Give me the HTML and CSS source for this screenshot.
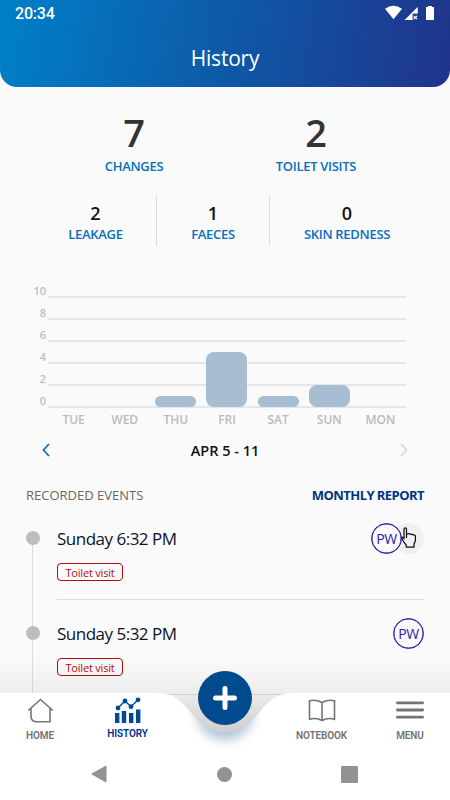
FILE: index.html
```html
<!DOCTYPE html>
<html lang="en">
<head>
  <meta charset="UTF-8" />
  <meta name="viewport" content="width=device-width, initial-scale=1.0"/>
  <title>History</title>
  <link rel="stylesheet" href="styles.css">
</head>
<body>
  <header class="header">
    <div class="status-bar">
      <span class="clock">20:34</span>
      <svg class="status-icons" width="52" height="18" viewBox="0 0 52 18" fill="#fff">
        <path d="M0 3.8Q8.5-2.2 17 3.8L8.5 14.3Z"/>
        <path d="M19.5 15L32.7 2V8.6H27.6V15Z"/>
        <path d="M32.7 2V8.6H27.6V7Z" opacity=".35"/>
        <path d="M28.7 10.8L32 14.2M32 10.8L28.7 14.2" stroke="#fff" stroke-width="1.2"/>
        <path d="M43 1h4v1h2v13h-8V2h2z"/>
      </svg>
    </div>
    <h1 class="title">History</h1>
  </header>

  <main class="content">
    <section class="stats">
      <div class="stat"><strong>7</strong><span>CHANGES</span></div>
      <div class="stat"><strong>2</strong><span>TOILET VISITS</span></div>
    </section>

    <section class="details">
      <div class="detail"><strong>2</strong><span>LEAKAGE</span></div>
      <div class="detail"><strong>1</strong><span>FAECES</span></div>
      <div class="detail"><strong>0</strong><span>SKIN REDNESS</span></div>
    </section>

    <section class="chart">
      <div class="scale">
        <span>10</span><span>8</span><span>6</span><span>4</span><span>2</span><span>0</span>
      </div>
      <div class="plot">
        <div class="bars">
          <div class="bar" style="height: 0"></div>
          <div class="bar" style="height: 0"></div>
          <div class="bar" style="height: 10%"></div>
          <div class="bar" style="height: 50%"></div>
          <div class="bar" style="height: 10%"></div>
          <div class="bar" style="height: 20%"></div>
          <div class="bar" style="height: 0"></div>
        </div>
        <div class="days">
          <span>TUE</span><span>WED</span><span>THU</span><span>FRI</span><span>SAT</span><span>SUN</span><span>MON</span>
        </div>
      </div>
    </section>

    <div class="week">
      <svg width="8" height="14" viewBox="0 0 8 14" fill="none" stroke="#0a72c4" stroke-width="1.8"><path d="M7 1L1.5 7L7 13"/></svg>
      <span>APR 5 - 11</span>
      <svg width="8" height="14" viewBox="0 0 8 14" fill="none" stroke="#d8d8d8" stroke-width="1.8"><path d="M1 1L6.5 7L1 13"/></svg>
    </div>

    <div class="events-head">
      <span class="events-title">RECORDED EVENTS</span>
      <a class="report">MONTHLY REPORT</a>
    </div>

    <section class="events">
      <article class="event">
        <div class="event-row">
          <span class="dot"></span>
          <h2>Sunday 6:32 PM</h2>
          <div class="people">
            <span class="avatar">PW</span>
            <span class="avatar-empty">
              <svg class="cursor" width="16" height="21" viewBox="0 0 16 21"><path d="M5.5 11V2Q5.5.8 4.3.8T3 2V11.5L1.8 10.4Q.2 9.8.7 11.3L3 15.5L5.3 18V20H13V17L14.4 14V9Q14 7.6 12.2 8Q11 6.7 9.5 7.3Q8 6.2 6.5 7H5.5" fill="#f1f2f4" stroke="#111" stroke-width="1.25"/></svg>
            </span>
          </div>
        </div>
        <div class="event-body"><span class="tag">Toilet visit</span></div>
      </article>
      <article class="event">
        <div class="event-row">
          <span class="dot"></span>
          <h2>Sunday 5:32 PM</h2>
          <div class="people"><span class="avatar">PW</span></div>
        </div>
        <div class="event-body"><span class="tag">Toilet visit</span></div>
      </article>
    </section>
  </main>

  <div class="fade"></div>

  <footer class="bottom">
    <svg class="bottom-shape" width="450" height="107" viewBox="0 0 450 107">
      <defs>
        <filter id="glow" x="-50%" y="-50%" width="200%" height="200%"><feGaussianBlur stdDeviation="6"/></filter>
        <clipPath id="sheet"><path d="M0 0H158C176 0 184 12 194 23C203 34 211 39 225 39C239 39 247 34 256 23C266 12 274 0 292 0H450V107H0Z"/></clipPath>
      </defs>
      <g clip-path="url(#sheet)">
        <rect width="450" height="107" fill="#fff"/>
        <circle cx="225" cy="19" r="28" fill="#004b8d" opacity=".33" filter="url(#glow)"/>
      </g>
    </svg>
    <nav class="tabs">
      <a class="tab tab-home">
        <svg width="27" height="26" viewBox="0 0 27 26" fill="none" stroke="#747474" stroke-width="1.6"><path d="M1.2 12.5L13.5 1.5L25.8 12.5M4 10.5V18Q4 23.8 10 23.8H23V10.5"/></svg>
        <span>HOME</span>
      </a>
      <a class="tab tab-history">
        <svg width="27" height="27" viewBox="0 0 27 27" fill="#004a93"><path d="M1 16h4.4v10H1zM7.8 14h4.4v12H7.8zM15 16h4.4v10H15zM22 12.5h4.4V26H22z"/><circle cx="4" cy="11" r="2.4"/><circle cx="11" cy="4" r="2.4"/><circle cx="17" cy="9.7" r="2.4"/><circle cx="24" cy="2.8" r="2.4"/><path d="M4 11L11 4L17 9.7L24 2.8" fill="none" stroke="#004a93" stroke-width="1.4"/></svg>
        <span>HISTORY</span>
      </a>
      <button class="add" aria-label="Add">
        <svg width="24" height="24" viewBox="0 0 24 24" fill="none" stroke="#fff" stroke-width="5" stroke-linecap="round"><path d="M12 2.5V21.5M2.5 12H21.5"/></svg>
      </button>
      <a class="tab tab-notebook">
        <svg width="28" height="23" viewBox="0 0 28 23" fill="none" stroke="#747474" stroke-width="1.6"><path d="M14 3.5Q8 .2 1.5 1.7V20.3Q8 18.3 14 21.5Q20 18.3 26.5 20.3V1.7Q20 .2 14 3.5V21.5"/></svg>
        <span>NOTEBOOK</span>
      </a>
      <a class="tab tab-menu">
        <svg width="28" height="20" viewBox="0 0 28 20" fill="none" stroke="#747474" stroke-width="2.8" stroke-linecap="round"><path d="M1.4 2.8H26.6M1.4 10H26.6M1.4 17.2H26.6"/></svg>
        <span>MENU</span>
      </a>
    </nav>
    <div class="system-nav">
      <svg width="16" height="18" viewBox="0 0 16 18"><path d="M.8 9L15 1V17Z" fill="#929292" stroke="#929292" stroke-linejoin="round"/></svg>
      <span class="sys-home"></span>
      <span class="sys-recent"></span>
    </div>
  </footer>
</body>
</html>
```
FILE: styles.css
```css
* {
  box-sizing: border-box;
}
body {
  position: relative;
  width: 450px;
  height: 800px;
  margin: 0;
  overflow: hidden;
  background: #fafafa;
  color: #111;
  font-family: 'Open Sans', 'Noto Sans', sans-serif;
}
h1, h2 {
  margin: 0;
}
svg {
  display: block;
  flex: none;
}

/* header */
.header {
  height: 87px;
  border-radius: 0 0 17px 17px;
  background: linear-gradient(100deg, #0080c8, #0e59a8 50%, #20348a);
  color: #fff;
}
.status-bar {
  display: flex;
  justify-content: space-between;
  height: 40px;
  padding: 5px 13px 0 15px;
}
.clock {
  font: 500 16px/18px Roboto, sans-serif;
  letter-spacing: -0.2px;
}
.title {
  font-size: 21px;
  line-height: 36px;
  font-weight: 500;
  letter-spacing: -0.2px;
  text-align: center;
}

/* totals */
.content {
  height: 713px;
  overflow: hidden;
}
.stats {
  display: flex;
  height: 109px;
  padding: 21px 43px 0;
}
.stat {
  flex: 1;
  display: flex;
  flex-direction: column;
  align-items: center;
}
.stat strong {
  font-size: 38px;
  line-height: 49px;
  font-weight: 600;
  color: #333;
}
.stat span, .detail span {
  font-size: 13px;
  line-height: 19px;
  font-weight: 600;
  letter-spacing: -0.3px;
  color: #086fbe;
  white-space: nowrap;
}
.details {
  display: grid;
  grid-template-columns: 122px 113px 154px;
  height: 50px;
  margin-left: 35px;
}
.detail {
  display: flex;
  flex-direction: column;
  align-items: center;
  padding-top: 6px;
  border-right: 1px solid #dcdcdc;
}
.detail:last-child {
  border-right: 0;
}
.detail strong {
  font-size: 18px;
  line-height: 23px;
  font-weight: 600;
}

/* chart */
.chart {
  display: flex;
  height: 146px;
  margin: 38px 44px 0 26px;
}
.scale {
  width: 22px;
  padding-right: 2px;
  text-align: right;
}
.scale span {
  display: block;
  height: 22px;
  font-size: 11px;
  line-height: 14px;
  font-weight: 600;
  color: #bdbdbd;
}
.plot {
  flex: 1;
  padding-top: 12px;
}
.bars {
  display: grid;
  grid-template-columns: repeat(7, 1fr);
  align-items: end;
  justify-items: center;
  height: 112px;
  padding-bottom: 1px;
  background: repeating-linear-gradient(#e6e6e6 0 2px, transparent 2px 22px);
}
.bar {
  width: 41px;
  border-radius: 8px;
  background: #a6bdd2;
}
.days {
  display: grid;
  grid-template-columns: repeat(7, 1fr);
  padding-top: 3px;
  text-align: center;
  font-size: 12px;
  line-height: 17px;
  font-weight: 600;
  color: #bababa;
}
.week {
  display: flex;
  justify-content: space-between;
  align-items: center;
  height: 20px;
  margin: 10px 42px 0;
  font-size: 14.5px;
  font-weight: 600;
}

/* events */
.events-head {
  display: flex;
  justify-content: space-between;
  align-items: center;
  height: 20px;
  margin: 25px 26px 0;
  font-size: 13px;
}
.events-title {
  color: #666;
}
.report {
  color: #003384;
  font-weight: 700;
  letter-spacing: -0.55px;
}
.events {
  margin-top: 14px;
  padding: 0 26px;
  background: linear-gradient(#dcdcdc, #dcdcdc) 32px 18px / 1px 100% no-repeat;
}
.event {
  height: 95px;
}
.event-row {
  display: flex;
  align-items: center;
  height: 38px;
}
.dot {
  width: 14px;
  height: 14px;
  margin-right: 17px;
  border-radius: 50%;
  background: #bdbdbd;
}
.event h2 {
  font-size: 17px;
  font-weight: 500;
  letter-spacing: -0.5px;
  color: #0b1328;
  white-space: nowrap;
}
.people {
  display: flex;
  margin-left: auto;
}
.avatar, .avatar-empty {
  width: 31px;
  height: 31px;
  border-radius: 50%;
}
.avatar {
  z-index: 1;
  border: 1px solid #2117a8;
  box-shadow: inset 0 0 0 0.5px #2117a8;
  background: #fafafa;
  color: #2b20ae;
  font-size: 14px;
  line-height: 29px;
  letter-spacing: -0.5px;
  text-align: center;
}
.avatar-empty {
  z-index: 2;
  margin-left: -9px;
  padding: 4px 0 0 8px;
  background: radial-gradient(circle at -6px 50%, transparent 15.5px, #eff0f2 16px);
}
.event-body {
  height: 43px;
  margin-left: 31px;
  padding-top: 6px;
  border-bottom: 1px solid #dcdcdc;
  line-height: 0;
}
.tag {
  display: inline-block;
  width: 66px;
  height: 18px;
  border: 1px solid #b50b10;
  border-radius: 4px;
  color: #b50b10;
  font-size: 11px;
  line-height: 17px;
  font-weight: 500;
  letter-spacing: -0.2px;
  text-align: center;
}

/* bottom navigation */
.fade {
  position: absolute;
  left: 0;
  bottom: 67px;
  width: 100%;
  height: 75px;
  background: linear-gradient(transparent, rgba(0,0,0,0.05) 46%, rgba(0,0,0,0.17) 95%);
}
.bottom {
  position: absolute;
  left: 0;
  bottom: 0;
  width: 100%;
  height: 107px;
}
.bottom-shape {
  position: absolute;
  left: 0;
  top: 0;
}
.tabs {
  position: relative;
  display: grid;
  grid-template-columns: 80px 95px 100px 93px 82px;
  height: 60px;
}
.tab {
  display: flex;
  flex-direction: column;
  align-items: center;
  padding-top: 4px;
  color: #737373;
  font: 600 10px/12px Roboto, sans-serif;
  letter-spacing: -0.1px;
}
.tab svg {
  margin-bottom: auto;
}
.tab span {
  margin-bottom: 11px;
}
.tab-home svg {
  margin-top: 1px;
}
.tab-history {
  color: #00308a;
}
.tab-history span {
  margin-bottom: 13px;
}
.tab-notebook svg {
  margin-top: 2px;
}
.tab-menu {
  padding-left: 2px;
}
.tab-menu svg {
  margin-top: 3px;
}
.add {
  display: flex;
  align-items: center;
  justify-content: center;
  justify-self: center;
  width: 54px;
  height: 54px;
  margin-top: -22px;
  padding: 0;
  border: none;
  border-radius: 50%;
  background: #004b8d;
}
.system-nav {
  position: relative;
  display: grid;
  grid-template-columns: repeat(3, 125px);
  align-items: center;
  justify-content: center;
  justify-items: center;
  height: 42px;
  padding-right: 2px;
}
.sys-home {
  width: 15px;
  height: 15px;
  border-radius: 50%;
  background: #929292;
}
.sys-recent {
  width: 17px;
  height: 17px;
  border-radius: 1px;
  background: #929292;
}
```
